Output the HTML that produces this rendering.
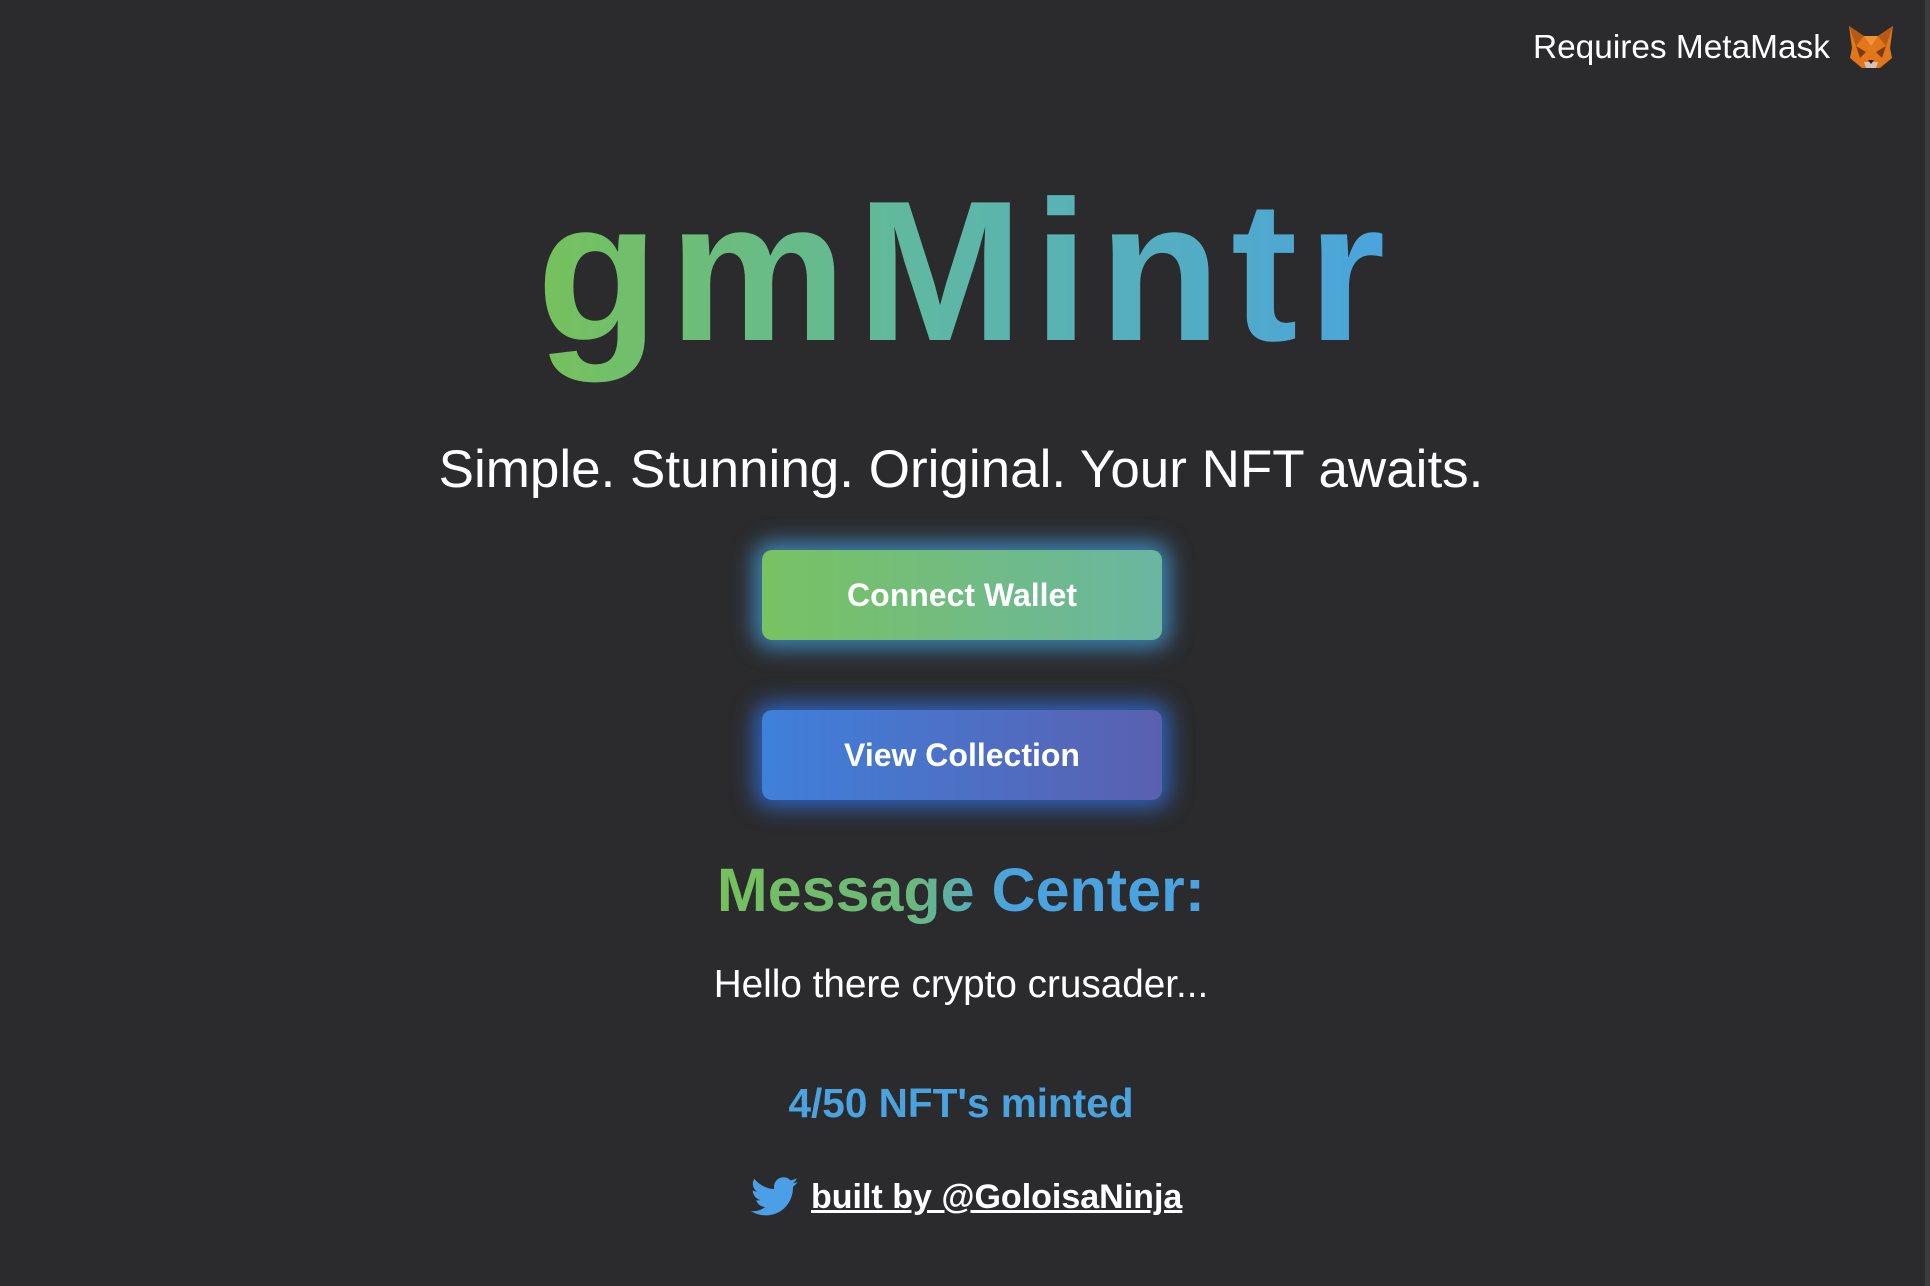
<!DOCTYPE html>
<html><head><meta charset="utf-8"><style>
html,body{margin:0;padding:0;width:1930px;height:1286px;overflow:hidden;background:#2b2b2d;font-family:"Liberation Sans",sans-serif;color:#fff}
.abs{position:absolute;white-space:nowrap}
.c{left:0;width:1922px;text-align:center}
.edge{position:absolute;right:0;top:0;width:5px;height:1286px;background:#3c3c3e}
.btn{position:absolute;left:762px;width:400px;height:90px;border-radius:10px;font-weight:bold;font-size:32px;text-align:center;line-height:90px;color:#fff}
.b1{top:550px;background:linear-gradient(90deg,#78c262,#6ab6a2);box-shadow:0 0 22px 8px rgba(70,170,240,.7)}
.b2{top:710px;background:linear-gradient(90deg,#3f80db,#5a60b0);box-shadow:0 0 22px 8px rgba(50,120,240,.7)}
.grad{background:linear-gradient(90deg,#76c15b 0%,#5fb8a2 45%,#4aa3df 100%);-webkit-background-clip:text;background-clip:text;color:transparent}
</style></head><body>
<div class="edge"></div>
<div class="abs" style="left:1533px;top:28px;font-size:33.4px;line-height:40px">Requires MetaMask</div>
<svg class="abs" style="left:1846px;top:24px" width="50" height="48" viewBox="0 0 50 48">
<polygon points="3,2 18,12 32,12 47,2 44,24 46,34 34,44 16,44 4,34 6,24" fill="#e2761b"/>
<polygon points="3,2 18,12 10,22" fill="#b75a14"/>
<polygon points="47,2 32,12 40,22" fill="#b75a14"/>
<polygon points="18,12 32,12 25,22" fill="#f0923a"/>
<polygon points="10,22 20,28 14,34" fill="#7a3b10"/>
<polygon points="40,22 30,28 36,34" fill="#7a3b10"/>
<polygon points="18,38 32,38 30,44 20,44" fill="#d7c1b3"/>
<polygon points="22,36 28,36 25,40" fill="#222"/>
</svg>
<div class="abs c" style="top:152px;font-size:200px;line-height:240px;font-weight:bold"><span class="grad" style="letter-spacing:10px;margin-right:-10px">gmMintr</span></div>
<div class="abs c" style="top:438px;font-size:53px;line-height:64px">Simple. Stunning. Original. Your NFT awaits.</div>
<div class="btn b1">Connect Wallet</div>
<div class="btn b2">View Collection</div>
<div class="abs c" style="top:854px;font-size:61px;line-height:72px;font-weight:bold"><span class="grad" style="background:linear-gradient(90deg,#76c15b 0%,#6bb87f 40%,#4aa3df 60%);-webkit-background-clip:text;background-clip:text">Message Center:</span></div>
<div class="abs c" style="top:961px;font-size:38.7px;line-height:48px">Hello there crypto crusader...</div>
<div class="abs c" style="top:1079px;font-size:40.5px;line-height:48px;font-weight:bold;color:#4aa3df">4/50 NFT's minted</div>
<svg class="abs" style="left:751px;top:1177px" width="48" height="40" viewBox="0 0 24 20">
<path fill="#4a9fe6" d="M23.6 2.4c-.9.4-1.8.6-2.8.8 1-.6 1.8-1.5 2.1-2.7-.9.6-2 1-3.1 1.2C18.9.7 17.700.1 16.3.1c-2.7 0-4.8 2.2-4.8 4.8 0 .4 0 .8.1 1.1C7.6 5.8 4 3.9 1.6.9c-.4.7-.7 1.6-.7 2.4 0 1.700.9 3.2 2.2 4-.8 0-1.5-.2-2.2-.6v.1c0 2.3 1.7 4.3 3.9 4.7-.4.1-.8.2-1.3.2-.3 0-.6 0-.9-.1.6 1.9 2.4 3.3 4.5 3.4-1.7 1.3-3.7 2.1-6 2.1-.4 0-.8 0-1.2-.1 2.1 1.4 4.7 2.2 7.4 2.2 8.9 0 13.7-7.4 13.7-13.7v-.6c1-.7 1.8-1.6 2.4-2.5z"/>
</svg>
<div class="abs" style="left:811px;top:1175px;font-size:34px;line-height:44px;font-weight:bold;text-decoration:underline;text-decoration-thickness:3px">built by @GoloisaNinja</div>
</body></html>
